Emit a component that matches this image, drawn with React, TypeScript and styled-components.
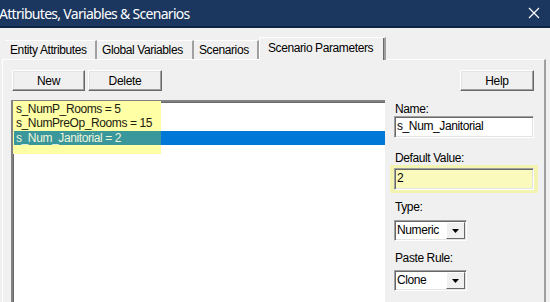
import React from "react";
import styled, { createGlobalStyle } from "styled-components";

const GlobalStyle = createGlobalStyle`
  html, body {
    margin: 0;
    padding: 0;
    background: #f0f0f0;
  }
  * {
    box-sizing: border-box;
  }
`;

const UI_FONT = `"Liberation Sans", Arial, sans-serif`;

const TABS = [
  { label: "Entity Attributes", width: 92, active: false },
  { label: "Global Variables", width: 97, active: false },
  { label: "Scenarios", width: 65, active: false },
  { label: "Scenario Parameters", width: 127, active: true },
];

const PARAMS = [
  { text: "s_NumP_Rooms = 5", selected: false },
  { text: "s_NumPreOp_Rooms = 15", selected: false },
  { text: "s_Num_Janitorial = 2", selected: true },
];

const Window = styled.div`
  width: 550px;
  height: 302px;
  overflow: hidden;
  background: #f0f0f0;
  font-family: ${UI_FONT};
  font-size: 12px;
  letter-spacing: -0.4px;
  color: #000;
`;

const TitleBar = styled.div`
  height: 28px;
  background: #1b3760;
  border-bottom: 2px solid #0f2445;
  display: flex;
  align-items: center;
  justify-content: space-between;
  padding-right: 10px;
`;

const Title = styled.span`
  font-family: "Noto Sans", "Open Sans", sans-serif;
  font-size: 14px;
  letter-spacing: -0.7px;
  color: #fff;
  margin-left: -1px;
`;

const TabStrip = styled.div`
  display: flex;
  align-items: flex-end;
  height: 31px;
  padding-left: 5px;
  position: relative;
  z-index: 1;
`;

const Tab = styled.div<{ $active: boolean; $w: number }>`
  width: ${({ $w }) => $w}px;
  height: ${({ $active }) => ($active ? "23px" : "19px")};
  padding: ${({ $active }) => ($active ? "0 0 3px 8px" : "0 0 0 5px")};
  display: flex;
  align-items: center;
  background: #f0f0f0;
  border-top: 1px solid #fff;
  border-left: ${({ $active }) => ($active ? "1px solid #fff" : "none")};
  border-right: 2px solid #a0a0a0;
  box-shadow: ${({ $active }) => ($active ? "inset -1px 0 0 #696969" : "none")};
  margin-bottom: ${({ $active }) => ($active ? "-1px" : "0")};
  white-space: nowrap;
`;

const Panel = styled.div`
  margin: 0 4px 0 2px;
  border-top: 1px solid #fff;
  border-left: 1px solid #fff;
  border-right: 2px solid #a0a0a0;
  padding: 10px 9px 0 8px;
  display: flex;
  height: 243px;
`;

const LeftCol = styled.div`
  width: 374px;
  display: flex;
  flex-direction: column;
`;

const ButtonRow = styled.div`
  display: flex;
  gap: 3px;
  padding-left: 1px;
`;

const Button = styled.button<{ $w: number }>`
  width: ${({ $w }) => $w}px;
  height: 21px;
  padding: 0;
  font-family: ${UI_FONT};
  font-size: 12px;
  letter-spacing: -0.3px;
  color: #000;
  background: #f0f0f0;
  border: 1px solid;
  border-color: #fff #696969 #696969 #fff;
  box-shadow: inset -1px -1px 0 #a0a0a0, inset 1px 1px 0 #e3e3e3;
`;

const ListBox = styled.div`
  position: relative;
  margin-top: 9px;
  flex: 1;
  background: #fff;
  border-top: 2px solid #828282;
  border-left: 2px solid #828282;
  box-shadow: inset 1px 1px 0 #696969;
  padding: 0 0 0 1px;
`;

const Highlight = styled.div`
  position: absolute;
  left: 0;
  top: -1px;
  width: 148px;
  height: 53px;
  background: #ffffa6;
`;

const Row = styled.div<{ $selected: boolean }>`
  position: relative;
  height: 14px;
  line-height: 14px;
  padding-left: 2px;
  color: ${({ $selected }) => ($selected ? "#eef5d8" : "#202010")};
  background: ${({ $selected }) =>
    $selected
      ? "linear-gradient(to right, #3a979c 0, #3a979c 147px, #0078d7 147px)"
      : "transparent"};
  margin-top: ${({ $selected }) => ($selected ? "1px" : "0")};
  white-space: nowrap;
`;

const RightCol = styled.div`
  width: 141px;
  margin-left: 9px;
  display: flex;
  flex-direction: column;
`;

const HelpButton = styled(Button)`
  align-self: flex-end;
  margin-right: 1px;
`;

const Label = styled.div<{ $top: number }>`
  margin-top: ${({ $top }) => $top}px;
  line-height: 13px;
  height: 13px;
  color: #000;
  padding-left: 1px;
`;

const TextBox = styled.div<{ $yellow?: boolean }>`
  width: 140px;
  height: 22px;
  line-height: 18px;
  padding-left: 2px;
  background: ${({ $yellow }) => ($yellow ? "#fafabd" : "#fff")};
  border-top: 1px solid #a0a0a0;
  border-left: 1px solid #a0a0a0;
  border-bottom: 1px solid #fff;
  border-right: 1px solid #fff;
  box-shadow: inset 1px 1px 0 #696969, inset -1px -1px 0 #e3e3e3;
  white-space: nowrap;
`;

const YellowMark = styled.div`
  margin: 0 -3px 0 -4px;
  padding: 3px 3px 3px 4px;
  background: #f4f4b2;
`;

const Select = styled.div<{ $top: number }>`
  margin-top: ${({ $top }) => $top}px;
  width: 73px;
  height: 21px;
  display: flex;
  background: #fff;
  border-top: 1px solid #a0a0a0;
  border-left: 1px solid #a0a0a0;
  border-bottom: 1px solid #fff;
  border-right: 1px solid #fff;
  box-shadow: inset 1px 1px 0 #696969, inset -1px -1px 0 #e3e3e3;
`;

const SelectText = styled.div`
  flex: 1;
  padding-left: 2px;
  line-height: 18px;
`;

const DropButton = styled.div`
  width: 19px;
  height: 17px;
  margin: 1px 1px 0 0;
  background: #f0f0f0;
  border: 1px solid;
  border-color: #fff #696969 #696969 #fff;
  display: flex;
  align-items: center;
  justify-content: center;
`;

function CloseIcon() {
  return (
    <svg width="12" height="12" viewBox="0 0 12 12">
      <path d="M1 1 L11 11 M11 1 L1 11" stroke="#fff" strokeWidth="1.2" fill="none" />
    </svg>
  );
}

function Arrow() {
  return (
    <svg width="8" height="4" viewBox="0 0 8 4">
      <path d="M0 0 H7 L3.5 4 Z" fill="#000" />
    </svg>
  );
}

function Combo({ value, top }: { value: string; top: number }) {
  return (
    <Select $top={top}>
      <SelectText>{value}</SelectText>
      <DropButton>
        <Arrow />
      </DropButton>
    </Select>
  );
}

export default function App() {
  return (
    <Window>
      <GlobalStyle />
      <TitleBar>
        <Title>Attributes, Variables &amp; Scenarios</Title>
        <CloseIcon />
      </TitleBar>
      <TabStrip>
        {TABS.map((t) => (
          <Tab key={t.label} $active={t.active} $w={t.width}>
            {t.label}
          </Tab>
        ))}
      </TabStrip>
      <Panel>
        <LeftCol>
          <ButtonRow>
            <Button $w={73}>New</Button>
            <Button $w={74}>Delete</Button>
          </ButtonRow>
          <ListBox>
            <Highlight />
            {PARAMS.map((p) => (
              <Row key={p.text} $selected={p.selected}>
                {p.text}
              </Row>
            ))}
          </ListBox>
        </LeftCol>
        <RightCol>
          <HelpButton $w={74}>Help</HelpButton>
          <Label $top={12}>Name:</Label>
          <TextBox>s_Num_Janitorial</TextBox>
          <Label $top={14}>Default Value:</Label>
          <YellowMark>
            <TextBox $yellow>2</TextBox>
          </YellowMark>
          <Label $top={8}>Type:</Label>
          <Combo value="Numeric" top={6} />
          <Label $top={11}>Paste Rule:</Label>
          <Combo value="Clone" top={5} />
        </RightCol>
      </Panel>
    </Window>
  );
}
